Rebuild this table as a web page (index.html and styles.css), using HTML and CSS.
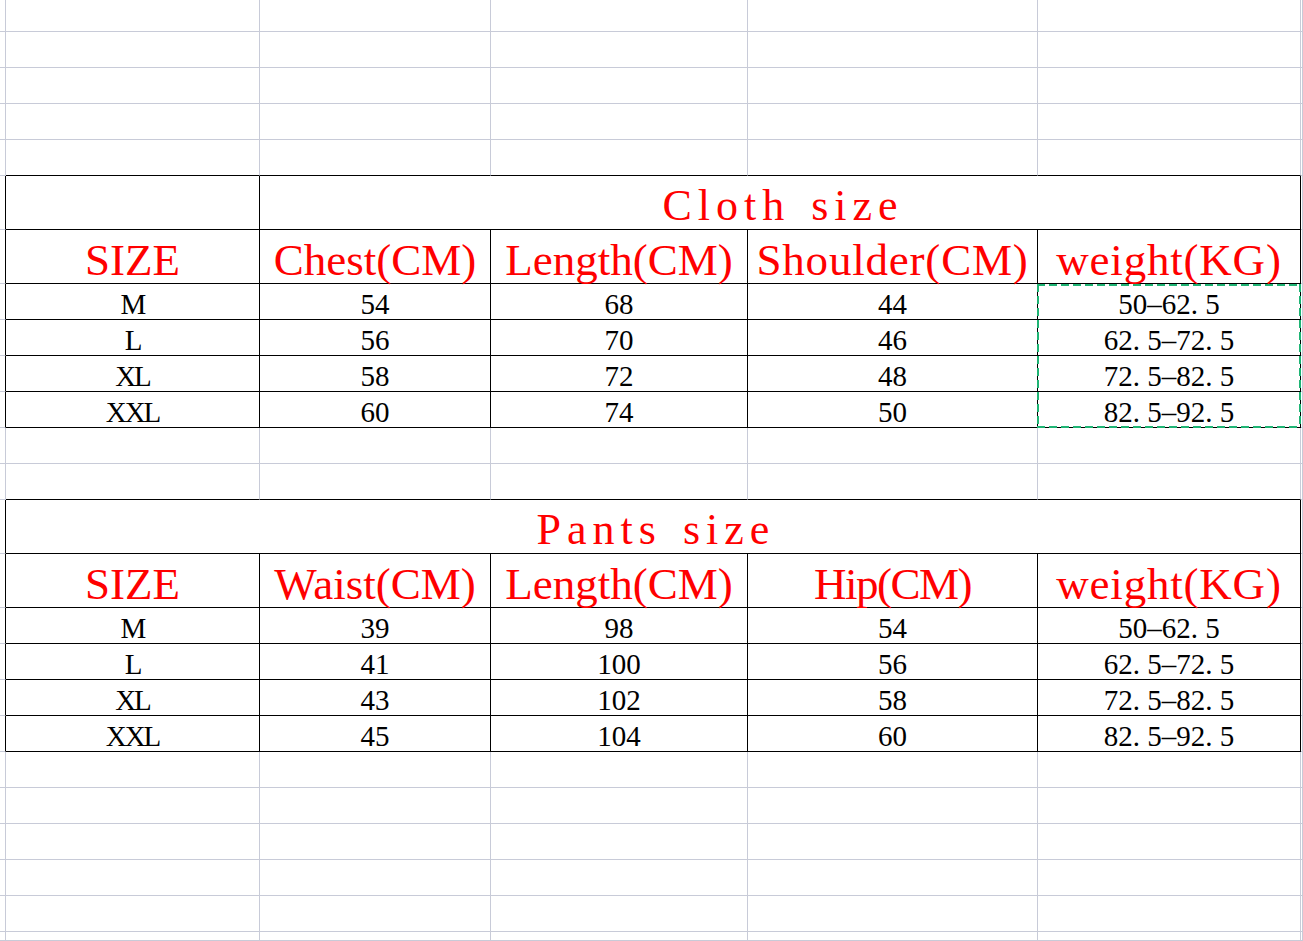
FILE: index.html
```html
<!DOCTYPE html>
<html>
<head>
<meta charset="utf-8">
<title>Size chart</title>
<link rel="stylesheet" href="styles.css">
</head>
<body>
<div class="sheet">
  <!-- row 0 (partial) -->
  <div class="c"></div><div class="c"></div><div class="c"></div><div class="c"></div><div class="c"></div><div class="c"></div><div class="c"></div>
  <!-- rows 1-3 -->
  <div class="c"></div><div class="c"></div><div class="c"></div><div class="c"></div><div class="c"></div><div class="c"></div><div class="c"></div>
  <div class="c"></div><div class="c"></div><div class="c"></div><div class="c"></div><div class="c"></div><div class="c"></div><div class="c"></div>
  <div class="c"></div><div class="c"></div><div class="c"></div><div class="c"></div><div class="c"></div><div class="c"></div><div class="c"></div>
  <!-- row 4: top edge of cloth table -->
  <div class="c"></div><div class="c bb"></div><div class="c bb"></div><div class="c bb"></div><div class="c bb"></div><div class="c bb"></div><div class="c"></div>

  <!-- Cloth table -->
  <div class="c br"></div><div class="c k"></div><div class="c k t span4">Cloth size</div><div class="c"></div>
  <div class="c br"></div><div class="c k h">SIZE</div><div class="c k h">Chest(CM)</div><div class="c k h">Length(CM)</div><div class="c k h wide">Shoulder(CM)</div><div class="c k h wide">weight(KG)</div><div class="c"></div>
  <div class="c br"></div><div class="c k d sz">M</div><div class="c k d">54</div><div class="c k d">68</div><div class="c k d">44</div><div class="c k d">50–62<span class="p">.</span>5</div><div class="c"></div>
  <div class="c br"></div><div class="c k d sz">L</div><div class="c k d">56</div><div class="c k d">70</div><div class="c k d">46</div><div class="c k d">62<span class="p">.</span>5–72<span class="p">.</span>5</div><div class="c"></div>
  <div class="c br"></div><div class="c k d sz">XL</div><div class="c k d">58</div><div class="c k d">72</div><div class="c k d">48</div><div class="c k d">72<span class="p">.</span>5–82<span class="p">.</span>5</div><div class="c"></div>
  <div class="c br"></div><div class="c k d sz">XXL</div><div class="c k d">60</div><div class="c k d">74</div><div class="c k d">50</div><div class="c k d">82<span class="p">.</span>5–92<span class="p">.</span>5</div><div class="c"></div>

  <!-- rows 11-12 -->
  <div class="c"></div><div class="c"></div><div class="c"></div><div class="c"></div><div class="c"></div><div class="c"></div><div class="c"></div>
  <div class="c"></div><div class="c bb"></div><div class="c bb"></div><div class="c bb"></div><div class="c bb"></div><div class="c bb"></div><div class="c"></div>

  <!-- Pants table -->
  <div class="c br"></div><div class="c k t span5">Pants size</div><div class="c"></div>
  <div class="c br"></div><div class="c k h">SIZE</div><div class="c k h">Waist(CM)</div><div class="c k h">Length(CM)</div><div class="c k h narrow">Hip(CM)</div><div class="c k h wide">weight(KG)</div><div class="c"></div>
  <div class="c br"></div><div class="c k d sz">M</div><div class="c k d">39</div><div class="c k d">98</div><div class="c k d">54</div><div class="c k d">50–62<span class="p">.</span>5</div><div class="c"></div>
  <div class="c br"></div><div class="c k d sz">L</div><div class="c k d">41</div><div class="c k d">100</div><div class="c k d">56</div><div class="c k d">62<span class="p">.</span>5–72<span class="p">.</span>5</div><div class="c"></div>
  <div class="c br"></div><div class="c k d sz">XL</div><div class="c k d">43</div><div class="c k d">102</div><div class="c k d">58</div><div class="c k d">72<span class="p">.</span>5–82<span class="p">.</span>5</div><div class="c"></div>
  <div class="c br"></div><div class="c k d sz">XXL</div><div class="c k d">45</div><div class="c k d">104</div><div class="c k d">60</div><div class="c k d">82<span class="p">.</span>5–92<span class="p">.</span>5</div><div class="c"></div>

  <!-- rows 19-24 -->
  <div class="c"></div><div class="c"></div><div class="c"></div><div class="c"></div><div class="c"></div><div class="c"></div><div class="c"></div>
  <div class="c"></div><div class="c"></div><div class="c"></div><div class="c"></div><div class="c"></div><div class="c"></div><div class="c"></div>
  <div class="c"></div><div class="c"></div><div class="c"></div><div class="c"></div><div class="c"></div><div class="c"></div><div class="c"></div>
  <div class="c"></div><div class="c"></div><div class="c"></div><div class="c"></div><div class="c"></div><div class="c"></div><div class="c"></div>
  <div class="c"></div><div class="c"></div><div class="c"></div><div class="c"></div><div class="c"></div><div class="c"></div><div class="c"></div>
  <div class="c"></div><div class="c"></div><div class="c"></div><div class="c"></div><div class="c"></div><div class="c"></div><div class="c"></div>

  <div class="copy-range" aria-hidden="true"></div>
</div>
</body>
</html>
```

FILE: styles.css
```css
html, body {
  margin: 0;
  padding: 0;
  background: #ffffff;
  overflow: hidden;
}

.sheet {
  position: relative;
  display: grid;
  grid-template-columns: 6px 254px 231px 257px 290px 263px 2px;
  grid-template-rows:
    32px 36px 36px 36px 36px
    54px 54px 36px 36px 36px 36px
    36px 36px
    54px 54px 36px 36px 36px 36px
    36px 36px 36px 36px 36px 9px;
  width: 1303px;
  height: 941px;
  font-family: "Liberation Serif", "Times New Roman", serif;
  color: #000000;
}

.c {
  box-sizing: border-box;
  border-right: 1px solid #c8cbd8;
  border-bottom: 1px solid #c8cbd8;
  display: flex;
  align-items: flex-end;
  justify-content: center;
  white-space: nowrap;
  line-height: 1;
}

.bb { border-bottom-color: #000000; }
.br { border-right-color: #000000; }
.k {
  border-right-color: #000000;
  border-bottom-color: #000000;
}

.span4 { grid-column: span 4; }
.span5 { grid-column: span 5; }

.t {
  color: #ff0000;
  font-size: 44px;
  letter-spacing: 6px;
  word-spacing: 4px;
  padding-left: 6px;
  padding-bottom: 1px;
}

.h {
  color: #ff0000;
  font-size: 45px;
}
.h.wide { letter-spacing: 0.8px; }
.h.narrow { letter-spacing: -1.5px; }

.d {
  font-size: 29px;
}
.d.sz { letter-spacing: -2px; }

.p {
  display: inline-block;
  width: 0.5em;
  text-align: left;
}

.copy-range {
  position: absolute;
  left: 1037px;
  top: 284px;
  width: 264px;
  height: 144px;
  pointer-events: none;
  background:
    repeating-linear-gradient(to right, #1fb474 0 8px, transparent 8px 12px) left top / 100% 2px no-repeat,
    repeating-linear-gradient(to right, #1fb474 0 8px, transparent 8px 12px) left bottom / 100% 2px no-repeat,
    repeating-linear-gradient(to bottom, #1fb474 0 8px, transparent 8px 12px) left top / 2px 100% no-repeat,
    repeating-linear-gradient(to bottom, #1fb474 0 8px, transparent 8px 12px) right top / 2px 100% no-repeat;
}
```
